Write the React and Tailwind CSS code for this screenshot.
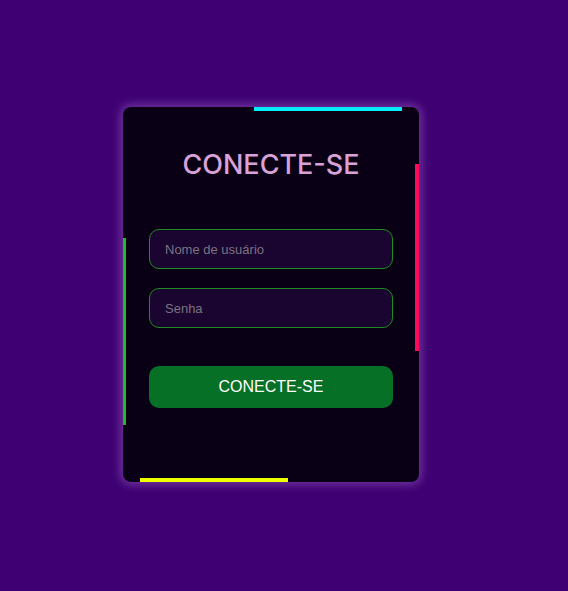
import React from 'react';

const App = () => {
  return (
    <div className="min-h-screen w-full bg-[#3e0072] flex items-center pl-[123px] pb-[2px]">
      <div className="relative w-[296px] h-[375px] rounded-lg bg-[#0a0015] shadow-[0_0_10px_3px_rgba(170,110,210,0.45)] overflow-hidden px-[26px] pt-[43px]">
        {/* animated border bits */}
        <span className="absolute top-0 left-[131px] w-[148px] h-[4px] bg-[#00eeff]" />
        <span className="absolute right-0 top-[57px] w-[4px] h-[187px] bg-[#ff0a5a]" />
        <span className="absolute bottom-0 left-[17px] w-[148px] h-[4px] bg-[#eeff00]" />
        <span className="absolute left-0 top-[131px] w-[3px] h-[187px] bg-[#18c018]" />

        <h1 className="text-center text-[27px] leading-[30px] font-medium text-[#d8a2d8] font-[Inter,sans-serif]">
          CONECTE-SE
        </h1>

        <form className="mt-[49px] flex flex-col gap-[19px]" onSubmit={(e) => e.preventDefault()}>
          <input
            type="text"
            placeholder="Nome de usuário"
            className="h-[40px] w-full rounded-[10px] border border-[#1e8c1e] bg-[#1a0530] px-[15px] text-[13px] text-white placeholder:text-[#7a7280] font-['Liberation_Sans',sans-serif] outline-none"
          />
          <input
            type="password"
            placeholder="Senha"
            className="h-[40px] w-full rounded-[10px] border border-[#1e8c1e] bg-[#1a0530] px-[15px] text-[13px] text-white placeholder:text-[#7a7280] font-['Liberation_Sans',sans-serif] outline-none"
          />
          <button
            type="submit"
            className="mt-[19px] h-[42px] w-full rounded-[10px] bg-[#057026] text-white text-[16px] font-['Liberation_Sans',sans-serif]"
          >
            CONECTE-SE
          </button>
        </form>
      </div>
    </div>
  );
};

export default App;
